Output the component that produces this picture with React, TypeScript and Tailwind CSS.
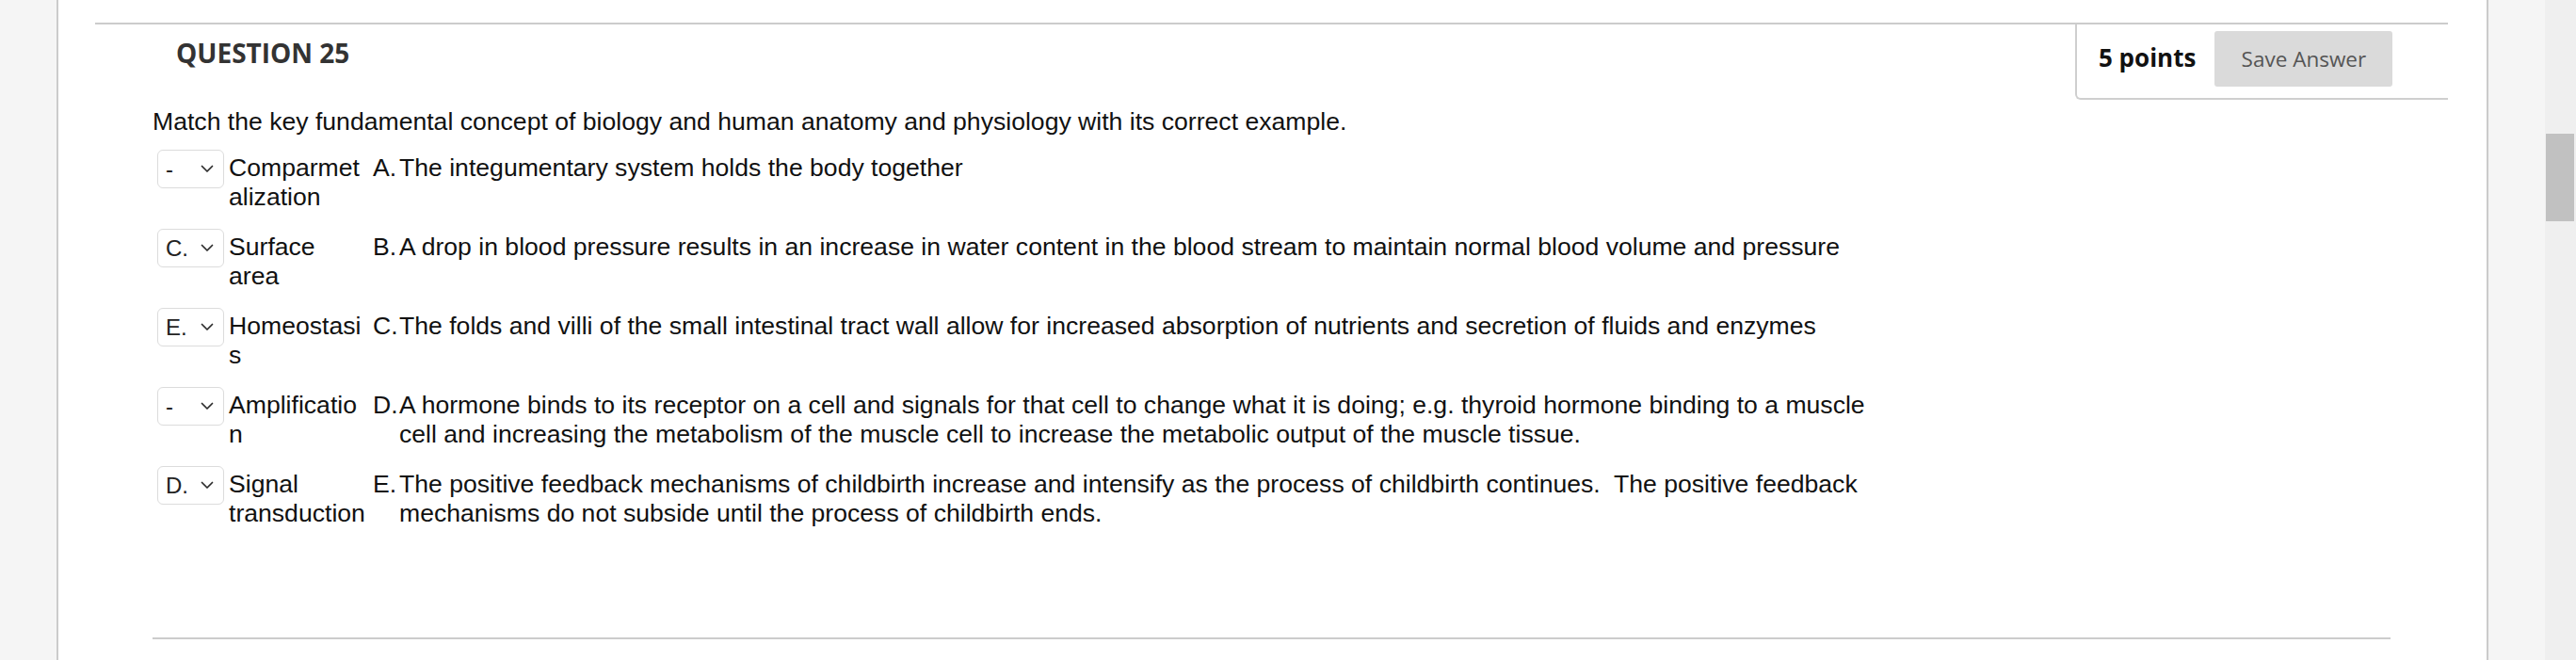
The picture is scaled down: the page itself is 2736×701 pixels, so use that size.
import React from "react";

const rows = [
  {
    sel: "-",
    term: "Comparmetalization",
    letter: "A.",
    desc: "The integumentary system holds the body together",
  },
  {
    sel: "C.",
    term: "Surface area",
    letter: "B.",
    desc: "A drop in blood pressure results in an increase in water content in the blood stream to maintain normal blood volume and pressure",
  },
  {
    sel: "E.",
    term: "Homeostasis",
    letter: "C.",
    desc: "The folds and villi of the small intestinal tract wall allow for increased absorption of nutrients and secretion of fluids and enzymes",
  },
  {
    sel: "-",
    term: "Amplification",
    letter: "D.",
    desc: "A hormone binds to its receptor on a cell and signals for that cell to change what it is doing; e.g. thyroid hormone binding to a muscle cell and increasing the metabolism of the muscle cell to increase the metabolic output of the muscle tissue.",
  },
  {
    sel: "D.",
    term: "Signal transduction",
    letter: "E.",
    desc: "The positive feedback mechanisms of childbirth increase and intensify as the process of childbirth continues.\u00a0 The positive feedback mechanisms do not subside until the process of childbirth ends.",
  },
];

const Chevron = () => (
  <svg width="14" height="9" viewBox="0 0 14 9" fill="none">
    <polyline
      points="1.5,1.5 7,7 12.5,1.5"
      stroke="#2a2a2a"
      strokeWidth="1.7"
      strokeLinecap="round"
      strokeLinejoin="round"
    />
  </svg>
);

const MatchRow = ({ row }: { row: (typeof rows)[number] }) => {
  return (
    <div className="flex items-start">
      <div className="ml-[5px] flex h-[41px] w-[71px] shrink-0 items-center justify-between rounded-[6px] border border-[#dcdcdc] bg-white pl-[8px] pr-[10px] text-[24px] text-[#222]">
        <span>{row.sel}</span>
        <Chevron />
      </div>
      <div className="ml-[5px] w-[148px] shrink-0 pt-[4px] [overflow-wrap:break-word]">
        {row.term}
      </div>
      <div className="ml-[5px] w-[28px] shrink-0 pt-[4px]">{row.letter}</div>
      <div className="w-[1580px] pt-[4px]">{row.desc}</div>
    </div>
  );
};

export default function App() {
  return (
    <div className="flex h-[701px] w-full overflow-hidden bg-[#f5f5f5]">
      <div className="w-[60px] shrink-0" />

      <main className="flex-1 border-x-2 border-[#cbcbcb] bg-white pt-[24px]">
        <section className="ml-[39px] mr-[41px] border-t-2 border-[#cccccc]">
          <div className="flex items-start justify-between">
            <h2 className="pl-[86px] pt-[11px] font-['Open_Sans',sans-serif] text-[28px] leading-[38px] font-bold text-[#333]">
              QUESTION 25
            </h2>
            <div className="flex h-[80px] w-[396px] items-start rounded-bl-[6px] border-b-2 border-l-2 border-[#cfcfcf] pl-[23px] pt-[7px] font-['Open_Sans',sans-serif]">
              <span className="pt-[10px] text-[26px] leading-[36px] font-bold text-[#111]">5 points</span>
              <button className="ml-[20px] h-[59px] w-[189px] rounded-[3px] bg-[#dadada] text-[22.5px] text-[#555]">
                Save Answer
              </button>
            </div>
          </div>

          <div className="pl-[61px] pt-[8px] font-['Liberation_Sans',Arial,sans-serif] text-[26.6px] leading-[31px] text-[#111]">
            <p>
              Match the key fundamental concept of biology and human anatomy and physiology with its correct example.
            </p>
            <div className="mt-[14px] flex flex-col gap-[18px]">
              {rows.map((row, index) => (
                <MatchRow key={index} row={row} />
              ))}
            </div>
            <div className="mr-[61px] mt-[116px] border-t-2 border-[#cccccc]" />
          </div>
        </section>
      </main>

      <div className="w-[60px] shrink-0" />
      <div className="w-[33px] shrink-0 bg-[#efefef] pl-[1px] pt-[142px]">
        <div className="h-[93px] w-[30px] bg-[#c1c1c1]" />
      </div>
    </div>
  );
}
